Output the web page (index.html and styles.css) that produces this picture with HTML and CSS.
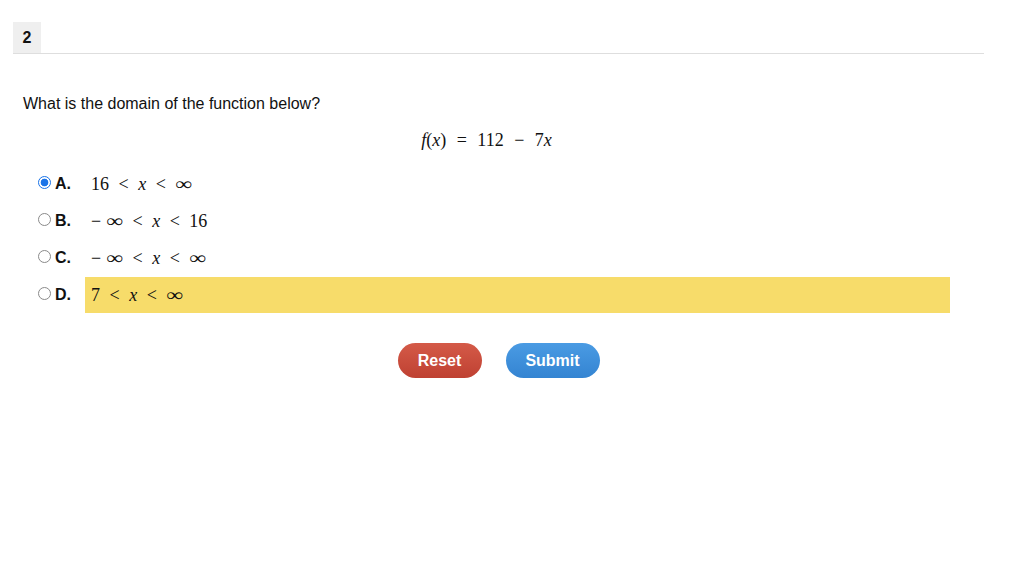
FILE: index.html
```html
<!DOCTYPE html>
<html>
<head>
<meta charset="utf-8">
<link rel="stylesheet" href="styles.css">
</head>
<body>
<div class="page">
  <div class="header"><span class="qnum">2</span></div>
  <div class="content">
    <p class="question">What is the domain of the function below?</p>
    <div class="equation"><span class="mi">f</span>(<span class="mi">x</span>) <span class="op">=</span> 112 <span class="op">−</span> 7<span class="mi">x</span></div>
    <div class="options">
      <div class="option">
        <span class="radio checked"></span><span class="letter">A.</span>
        <div class="answer"><span class="math">16 <span class="op">&lt;</span> <span class="mi">x</span> <span class="op">&lt;</span> <span class="inf">∞</span></span></div>
      </div>
      <div class="option">
        <span class="radio"></span><span class="letter">B.</span>
        <div class="answer"><span class="math"><span class="neg">−</span><span class="inf">∞</span> <span class="op">&lt;</span> <span class="mi">x</span> <span class="op">&lt;</span> 16</span></div>
      </div>
      <div class="option">
        <span class="radio"></span><span class="letter">C.</span>
        <div class="answer"><span class="math"><span class="neg">−</span><span class="inf">∞</span> <span class="op">&lt;</span> <span class="mi">x</span> <span class="op">&lt;</span> <span class="inf">∞</span></span></div>
      </div>
      <div class="option">
        <span class="radio"></span><span class="letter">D.</span>
        <div class="answer highlight"><span class="math">7 <span class="op">&lt;</span> <span class="mi">x</span> <span class="op">&lt;</span> <span class="inf">∞</span></span></div>
      </div>
    </div>
    <div class="buttons">
      <button class="btn reset">Reset</button>
      <button class="btn submit">Submit</button>
    </div>
  </div>
</div>
</body>
</html>
```
FILE: styles.css
```css
html, body {
  margin: 0;
  padding: 0;
  background: #fff;
}
body {
  font-family: "Liberation Sans", Arial, sans-serif;
  color: #111;
}
.page {
  padding: 22px 31px 0 13px;
}
.header {
  border-bottom: 1px solid #dedede;
  height: 31px;
}
.qnum {
  display: inline-flex;
  align-items: center;
  justify-content: center;
  width: 28px;
  height: 31px;
  background: #efefef;
  font-weight: bold;
  font-size: 16px;
}
.content {
  padding: 0 34px 0 10px;
}
.question {
  margin: 41px 0 0 0;
  font-size: 16px;
  line-height: 18px;
}
.equation {
  margin-top: 15px;
  text-align: center;
  font-family: "Liberation Serif", "Times New Roman", serif;
  font-size: 18px;
  line-height: 24px;
  word-spacing: 3px;
}
.mi {
  font-style: italic;
}
.op {
  padding: 0 3px;
}
.options {
  margin-top: 14px;
  display: flex;
  flex-direction: column;
  gap: 1px;
}
.option {
  display: flex;
  align-items: center;
  height: 36px;
}
.radio {
  width: 11px;
  height: 11px;
  border: 1px solid #8a8a8a;
  border-radius: 50%;
  margin-left: 15px;
  margin-top: -4px;
  background: #fff;
  flex: none;
  box-sizing: content-box;
}
.radio.checked {
  border-color: #1a73e8;
  background: radial-gradient(circle, #1a73e8 0 3.5px, #fff 4.2px);
}
.letter {
  font-weight: bold;
  font-size: 16px;
  margin-left: 4px;
  width: 30px;
}
.answer {
  flex: 1;
  align-self: stretch;
  display: flex;
  align-items: center;
  padding-left: 6px;
  font-family: "Liberation Serif", "Times New Roman", serif;
  font-size: 18px;
}
.math {
  word-spacing: 2px;
}
.math .op {
  padding: 0 3px;
}
.neg {
  padding-right: 5px;
}
.inf {
  display: inline-block;
  transform: scaleX(1.3);
  transform-origin: left center;
  margin-right: 4px;
}
.answer.highlight {
  background: #f7dc6a;
}
.buttons {
  margin-top: 30px;
  display: flex;
  justify-content: center;
  gap: 24px;
  padding-left: 24px;
}
.btn {
  border: none;
  height: 35px;
  border-radius: 18px;
  color: #fff;
  font-family: "Liberation Sans", Arial, sans-serif;
  font-weight: bold;
  font-size: 16px;
  padding: 0;
}
.reset {
  width: 84px;
  background: linear-gradient(#d45a48, #bf4132);
}
.submit {
  width: 94px;
  background: linear-gradient(#4a9be3, #3484d2);
}
```
